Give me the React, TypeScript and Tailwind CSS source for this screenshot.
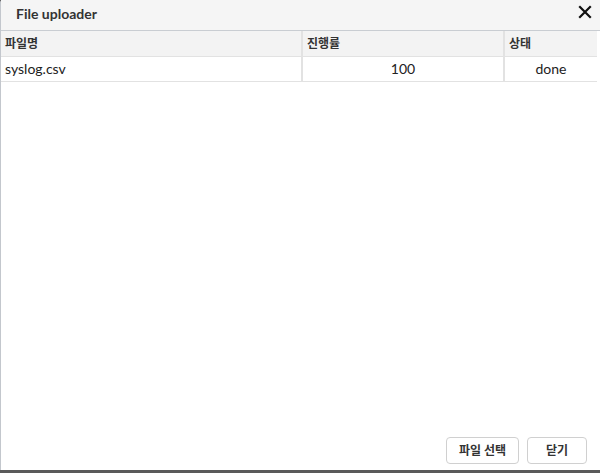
const font = { fontFamily: 'Lato, "Noto Sans CJK KR", sans-serif' };

const Cell = ({ children, className = "" }: { children?: React.ReactNode; className?: string }) => (
  <div className={`h-[24px] flex items-center px-[4px] ${className}`}>{children}</div>
);

export default function App() {
  return (
    <div className="w-[600px] h-[473px] bg-[#5a5a5a] text-[#222]" style={font}>
      <div className="w-[600px] h-[470px] flex flex-col bg-white border-l border-[#c3c7cd] rounded-tl-[3px]">
        <div className="h-[31px] bg-[#f5f5f5] flex items-center justify-between pl-[15px] pr-[8px] border-b border-[#c9cdd2]">
          <span className="text-[14px] font-bold text-[#333] mt-[-4px]">File uploader</span>
          <svg width="14" height="14" viewBox="0 0 14 14" className="mt-[-6px]">
            <path d="M2 2L12 12M12 2L2 12" stroke="#111" strokeWidth="2.2" strokeLinecap="square" />
          </svg>
        </div>
        <div className="grid grid-cols-[300px_200px_1fr] gap-x-[2px] bg-[#e2e2e2] mr-[3px] pb-[1px] gap-y-[1px]">
          <Cell className="bg-[#f3f3f3] text-[12px] font-bold text-[#333] h-[25px]">파일명</Cell>
          <Cell className="bg-[#f3f3f3] text-[12px] font-bold text-[#333] h-[25px]">진행률</Cell>
          <Cell className="bg-[#f3f3f3] text-[12px] font-bold text-[#333] h-[25px]">상태</Cell>
          <Cell className="bg-white text-[14px] px-[2px] pb-[2px]">syslog.csv</Cell>
          <Cell className="bg-white text-[14px] justify-center pb-[2px]">100</Cell>
          <Cell className="bg-white text-[14px] justify-center pb-[2px]">done</Cell>
        </div>
        <div className="flex-1" />
        <div className="flex justify-end gap-[8px] pr-[13px] pb-[6px]">
          <button className="w-[73px] h-[27px] border border-[#d0d0d0] rounded-[4px] bg-white text-[12px] font-bold text-[#333]">
            파일 선택
          </button>
          <button className="w-[60px] h-[27px] border border-[#d0d0d0] rounded-[4px] bg-white text-[12px] font-bold text-[#333]">
            닫기
          </button>
        </div>
      </div>
    </div>
  );
}
